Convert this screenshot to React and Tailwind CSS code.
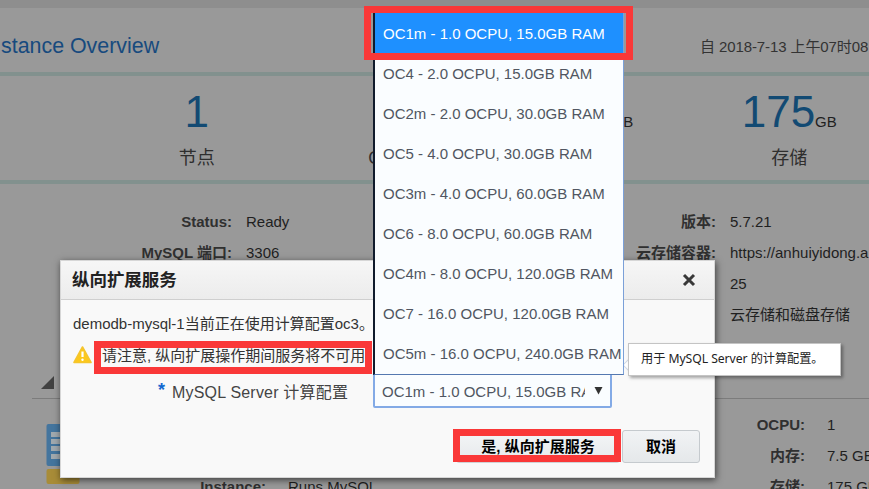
const cjk = "font-['Liberation_Sans','Noto_Sans_CJK_SC',sans-serif]";

const options = [
  'OC1m - 1.0 OCPU, 15.0GB RAM',
  'OC4 - 2.0 OCPU, 15.0GB RAM',
  'OC2m - 2.0 OCPU, 30.0GB RAM',
  'OC5 - 4.0 OCPU, 30.0GB RAM',
  'OC3m - 4.0 OCPU, 60.0GB RAM',
  'OC6 - 8.0 OCPU, 60.0GB RAM',
  'OC4m - 8.0 OCPU, 120.0GB RAM',
  'OC7 - 16.0 OCPU, 120.0GB RAM',
  'OC5m - 16.0 OCPU, 240.0GB RAM',
];

function Row({ label, value, labelClass, gap = 'gap-[14px]' }) {
  return (
    <div className={`flex h-[31px] items-center whitespace-nowrap ${gap}`}>
      <span className={`shrink-0 text-right font-bold text-[#303030] ${labelClass}`}>{label}</span>
      <span className="text-[#1f1f1f]">{value}</span>
    </div>
  );
}

function Stat({ value, unit, label }) {
  return (
    <div className="flex w-[197.5px] shrink-0 flex-col items-center">
      <div className="flex h-[64px] items-baseline whitespace-nowrap pt-[4px] leading-[64px]">
        <span className="text-[44px] text-[#124a73]">{value}</span>
        <span className="text-[15px] text-[#1f1f1f]">{unit}</span>
      </div>
      <div className="mt-[4px] text-[18px] leading-[28px] text-[#2e2e2e]">{label}</div>
    </div>
  );
}

function Page() {
  return (
    <div className="flex h-full flex-col text-[15px]">
      <div className="h-2 shrink-0 bg-[#8e8e8e]" />
      <header className="flex h-16 shrink-0 items-center justify-between whitespace-nowrap">
        <h1 className="pl-px pt-3 text-[21.4px] text-[#174a7e]">stance Overview</h1>
        <div className="w-[169px] pt-[14px] text-[15px] tracking-[-0.1px] text-[#333]">自 2018-7-13 上午07时08</div>
      </header>
      <section className="flex h-[112px] shrink-0 border-y-4 border-[#82918e] pl-[98px]">
        <Stat value="1" label="节点" />
        <Stat value="1" label="OCPU" />
        <Stat value="7.5" unit="GB" label="内存" />
        <Stat value="175" unit="GB" label="存储" />
      </section>
      <section className="flex h-[192px] shrink-0 pt-[23px]">
        <div className="w-[500px]">
          <Row label="Status:" value="Ready" labelClass="w-[232px]" />
          <Row label="MySQL 端口:" value="3306" labelClass="w-[232px]" />
        </div>
        <div>
          <Row label="版本:" value="5.7.21" labelClass="w-[216px]" />
          <Row label="云存储容器:" value="https://anhuiyidong.a" labelClass="w-[216px]" />
          <Row label="" value="25" labelClass="w-[216px]" />
          <Row label="" value="云存储和磁盘存储" labelClass="w-[216px]" />
        </div>
      </section>
      <div className="flex h-[23px] shrink-0 pl-8">
        <div className="flex-1 border-b border-[#7c7c7c] pl-[9px]">
          <svg width="13" height="13" viewBox="0 0 13 13">
            <path d="M13 0V13H0Z" fill="#414141" />
          </svg>
        </div>
      </div>
      <section className="flex shrink-0 pt-[11px]">
        <div className="flex w-[540px] shrink-0 pl-[46px]">
          <svg className="mt-[14px] shrink-0" width="34" height="61" viewBox="0 0 34 61">
            <rect x="0.5" width="33" height="42" rx="2" fill="#44759e" />
            <g fill="#a1a9ae">
              <rect x="5" y="8" width="24" height="5" />
              <rect x="5" y="15" width="24" height="5" />
              <rect x="5" y="22" width="24" height="5" />
              <rect x="5" y="30" width="24" height="5" />
            </g>
            <rect x="0.5" y="45" width="33" height="15" rx="2" fill="#a88c38" />
          </svg>
          <div className="pt-[62px]">
            <Row label="Instance:" value="Runs MySQL" labelClass="w-[186px]" gap="gap-[22px]" />
          </div>
        </div>
        <div>
          <Row label="OCPU:" value="1" labelClass="w-[265px]" gap="gap-[22px]" />
          <Row label="内存:" value="7.5 GB" labelClass="w-[265px]" gap="gap-[22px]" />
          <Row label="存储:" value="175 GB" labelClass="w-[265px]" gap="gap-[22px]" />
        </div>
      </section>
    </div>
  );
}

function Dialog() {
  return (
    <div className="absolute left-[60px] top-[260px] flex h-[218px] w-[655px] flex-col border border-[#d6d6d6] bg-[#f9f9f9] shadow-[1px_2px_7px_rgba(0,0,0,0.6)]">
      <div className="flex h-[39px] shrink-0 items-center justify-between border-b border-[#cfcfcf] bg-linear-to-b from-[#f6f6f6] to-[#ececec] pl-[11px] pr-[18px]">
        <h2 className="pt-px text-[17.5px] font-bold tracking-[-0.05px] text-[#222]">纵向扩展服务</h2>
        <svg width="14" height="14" viewBox="0 0 14 14">
          <path d="M2 2L12 12M12 2L2 12" stroke="#383838" strokeWidth="3" />
        </svg>
      </div>
      <p className="h-[48px] whitespace-nowrap pl-3 pt-[13px] text-[15px] leading-[22px] text-[#333]">
        demodb-mysql-1当前正在使用计算配置oc3。
      </p>
      <div className="flex h-[25px] pl-3">
        <svg className="-mt-[2px]" width="19" height="18" viewBox="0 0 19 18">
          <path d="M9.5 1L18 16.5H1Z" fill="#fcc81b" stroke="#f5c52c" strokeWidth="1.6" strokeLinejoin="round" />
          <path d="M9.5 5.5V11" stroke="#fff" strokeWidth="2.2" />
          <circle cx="9.5" cy="13.7" r="1.2" fill="#fff" />
        </svg>
        <span className="-mt-px ml-[10px] whitespace-nowrap text-[15px] leading-[17px] text-[#333]">请注意, 纵向扩展操作期间服务将不可用</span>
      </div>
      <div className="flex h-[36px] shrink-0">
        <div className="flex w-[312px] whitespace-nowrap pl-[97px] pt-[5px] leading-[30px]">
          <span className="-mt-[3px] w-[14px] text-[18px] font-bold text-[#1268d0]">*</span>
          <span className="text-[16px] tracking-[0.2px] text-[#444]">MySQL Server 计算配置</span>
        </div>
        <div className="flex h-[35px] w-[239px] items-center justify-between rounded-b-[2px] border-2 border-[#83aae6] bg-[#fafdff] pl-[7px] pr-[7px] text-[15px] text-[#505661]">
          <span className="w-[203px] overflow-hidden whitespace-nowrap pt-[2px] leading-[26px]">OC1m - 1.0 OCPU, 15.0GB RAM</span>
          <svg width="9" height="8" viewBox="0 0 9 8">
            <path d="M0.5 0H8.5L4.5 7.5Z" fill="#333" />
          </svg>
        </div>
      </div>
      <div className="mt-[21px] flex gap-[2px] pl-[395px] text-[15px] font-bold text-black">
        <button className="h-[33px] w-[164px] rounded-[3px] border border-[#d0d3d6] bg-linear-to-b from-[#f4f6f7] to-[#e6e9eb] pt-px">是, 纵向扩展服务</button>
        <button className="h-[33px] w-[78px] rounded-[3px] border border-[#c5cace] bg-linear-to-b from-[#f1f3f5] to-[#e5e8ea] pt-px">取消</button>
      </div>
    </div>
  );
}

function OptionList() {
  return (
    <ul className="absolute left-[373px] top-[13px] h-[362px] w-[251px] border-b border-l-2 border-r border-b-[#5478b0] border-l-[#101b2c] border-r-[#7ba0d8] bg-[#fafdff] text-[15px] text-[#505661]">
      {options.map((option, i) => (
        <li
          key={option}
          className={`flex h-10 items-center whitespace-nowrap pl-2 pt-[2px] ${i === 0 ? 'bg-[#1e90ff] text-white' : ''}`}
        >
          {option}
        </li>
      ))}
    </ul>
  );
}

export default function App() {
  return (
    <div className={`relative h-[489px] w-[869px] overflow-hidden bg-[#999] ${cjk}`}>
      <Page />
      <Dialog />
      <div className="absolute left-[624px] top-[361px] size-[8px] rotate-45 border border-[#d0d8e4] bg-white" />
      <OptionList />
      <div className="absolute left-[628px] top-[343px] flex h-[33px] w-[213px] items-center whitespace-nowrap border border-[#c4c4c4] bg-white pl-3 font-['Noto_Sans','Noto_Sans_CJK_SC',sans-serif] text-[12.2px] tracking-[-0.05px] text-[#222] shadow-[2px_2px_3px_rgba(0,0,0,0.35)]">
        用于 MySQL Server 的计算配置。
      </div>
      <div className="absolute left-[364px] top-[6px] h-[54px] w-[269px] border-[7px] border-[#fa3838]" />
      <div className="absolute left-[94px] top-[341px] h-[33px] w-[278px] border-[7px] border-[#fa3838]" />
      <div className="absolute left-[453px] top-[429px] h-[33px] w-[168px] border-[7px] border-[#fa3838]" />
    </div>
  );
}
